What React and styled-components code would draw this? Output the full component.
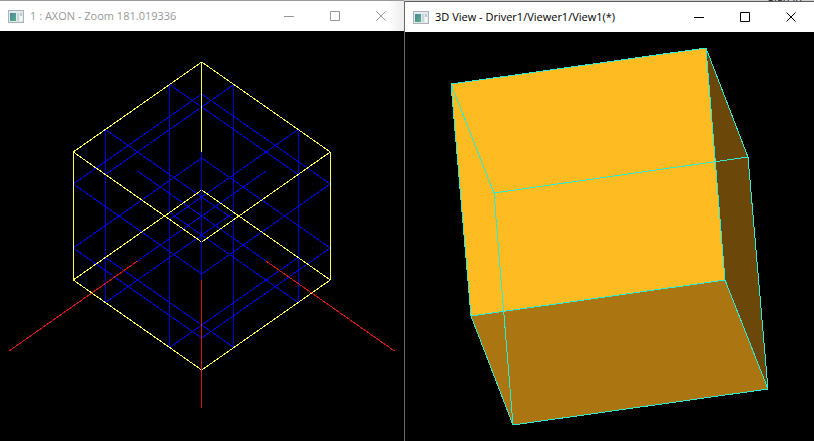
import React from "react";
import styled, { createGlobalStyle } from "styled-components";

const GlobalStyle = createGlobalStyle`
  * {
    box-sizing: border-box;
  }

  body {
    margin: 0;
    background: #000;
    font-family: "Open Sans", "Noto Sans", sans-serif;
  }
`;

const Desktop = styled.main`
  display: grid;
  grid-template-columns: 202fr 205fr;
  min-height: 100vh;
`;

const Column = styled.div`
  display: flex;
  flex-direction: column;
  min-width: 0;
`;

// strip of the window that lies behind the 3D view
const Behind = styled.div`
  display: flex;
  align-items: flex-end;
  justify-content: flex-end;
  height: 1px;
  padding-right: 12px;
  overflow: hidden;
  background: #cfcfcf;
  color: #222;
  font-size: 11px;
  line-height: 8px;
`;

const Window = styled.section`
  display: flex;
  flex: 1;
  flex-direction: column;
  min-width: 0;
  border-top: 1px solid ${(props) => (props.$active ? "#5c5c5c" : "#9a9a9a")};
  border-left: ${(props) => (props.$active ? "1px solid #6a6a6a" : "none")};
`;

const TitleBar = styled.header`
  display: flex;
  align-items: center;
  height: 30px;
  padding-left: 8px;
  background: ${(props) =>
    props.$active ? "#fff" : "linear-gradient(to left, #ececec, #fff 16px)"};
  color: ${(props) => (props.$active ? "#000" : "#999")};
`;

const Title = styled.h1`
  flex: 1;
  min-width: 0;
  margin: 0;
  padding-left: 6px;
  overflow: hidden;
  font-size: 11px;
  font-weight: 400;
  line-height: 16px;
  white-space: nowrap;
`;

const WindowButton = styled.button`
  display: flex;
  align-items: center;
  justify-content: center;
  width: 46px;
  height: 30px;
  padding: 0;
  border: 0;
  background: transparent;
  color: inherit;
`;

const Viewport = styled.div`
  display: grid;
  flex: 1;
  min-height: 0;
  background: #000;
`;

const Drawing = styled.svg`
  display: block;
  width: 100%;
  height: 100%;
  fill: none;
  shape-rendering: crispEdges;
`;

const AppIcon = () => (
  <svg width="16" height="13" viewBox="0 0 16 13" aria-hidden="true">
    <defs>
      <linearGradient id="pane" x1="0" y1="0" x2="1" y2="1">
        <stop offset="0" stopColor="#4d83a0" />
        <stop offset="1" stopColor="#57b083" />
      </linearGradient>
    </defs>
    <rect x="0.5" y="0.5" width="15" height="12" fill="#e4e9ec" stroke="#a9b3b9" />
    <rect x="2" y="3" width="6" height="8" fill="url(#pane)" />
    <rect x="9" y="3" width="2" height="8" fill="#c9d5dc" />
    <rect x="12" y="3" width="2" height="3" fill="#bccad4" />
    <rect x="12" y="6" width="2" height="5" fill="#f6f8f9" />
  </svg>
);

const glyphs = [
  { id: "Minimize", d: "M0 5.5H10" },
  { id: "Maximize", d: "M0.5 0.5H9.5V9.5H0.5Z" },
  { id: "Close", d: "M0.5 0.5L9.5 9.5M9.5 0.5L0.5 9.5" },
];

const AppWindow = ({ title, active, children }) => (
  <Window $active={active} aria-label={title}>
    <TitleBar $active={active}>
      <AppIcon />
      <Title>{title}</Title>
      {glyphs.map((glyph) => (
        <WindowButton key={glyph.id} type="button" aria-label={glyph.id}>
          <svg width="10" height="10" viewBox="0 0 10 10" fill="none" stroke="currentColor">
            <path d={glyph.d} />
          </svg>
        </WindowButton>
      ))}
    </TitleBar>
    <Viewport>{children}</Viewport>
  </Window>
);

// axonometric projection of a model point, the box goes from -1 to 1
const project = ([x, y, z]) => [201.75 + 64.25 * (x - y), 185 + 45 * (x + y) - 64 * z];

const segment = (from, to) => {
  const [x1, y1] = project(from);
  const [x2, y2] = project(to);
  return `M${x1} ${y1}L${x2} ${y2}`;
};

// line parallel to one axis, a and b are its two other coordinates
const along = (axis, a, b) => {
  const from = [a, b];
  const to = [a, b];
  from.splice(axis, 0, -1);
  to.splice(axis, 0, 1);
  return segment(from, to);
};

const axes = [0, 1, 2];
const ends = [-1, 1];
const inner = [-0.5, 0.5];

const edges = axes.flatMap((axis) => ends.flatMap((a) => ends.map((b) => along(axis, a, b))));
const isolines = axes.flatMap((axis) =>
  ends.flatMap((a) => inner.flatMap((b) => [along(axis, a, b), along(axis, b, a)]))
);
const centerLines = axes.map((axis) => along(axis, 0, 0));
const trihedron = [
  segment([1, 0, 0], [3, 0, 0]),
  segment([0, 1, 0], [0, 3, 0]),
  segment([0, 0, -1], [0, 0, -3]),
];

const AxonView = () => (
  <Drawing viewBox="0 0 404 410" role="img" aria-label="Wireframe box">
    <path d={isolines.join("")} stroke="#0000d8" />
    <path d={edges.join("")} stroke="#ffff50" />
    <path d={centerLines.join("")} stroke="#0000d8" />
    <path d={trihedron.join("")} stroke="#d81414" />
  </Drawing>
);

const faces = [
  { id: "back", points: "46,52 301,16 320,248 66,284", fill: "#ffbb22" },
  { id: "side", points: "301,16 343,125 363,357 320,248", fill: "#6b480a" },
  { id: "floor", points: "66,284 320,248 363,357 108,393", fill: "#ab7612" },
];

const ShadedView = () => (
  <Drawing viewBox="0 0 409 409" role="img" aria-label="Shaded box">
    {faces.map((face) => (
      <polygon key={face.id} points={face.points} fill={face.fill} />
    ))}
    <path
      stroke="#30ead0"
      d="M46 52L301 16L343 125L89 161ZM66 284L320 248L363 357L108 393ZM46 52L66 284M301 16L320 248M343 125L363 357M89 161L108 393"
    />
  </Drawing>
);

const App = () => (
  <>
    <GlobalStyle />
    <Desktop>
      <Column>
        <AppWindow title="1 : AXON - Zoom 181.019336">
          <AxonView />
        </AppWindow>
      </Column>
      <Column>
        <Behind>Sign in</Behind>
        <AppWindow title="3D View - Driver1/Viewer1/View1(*)" active>
          <ShadedView />
        </AppWindow>
      </Column>
    </Desktop>
  </>
);

export default App;
